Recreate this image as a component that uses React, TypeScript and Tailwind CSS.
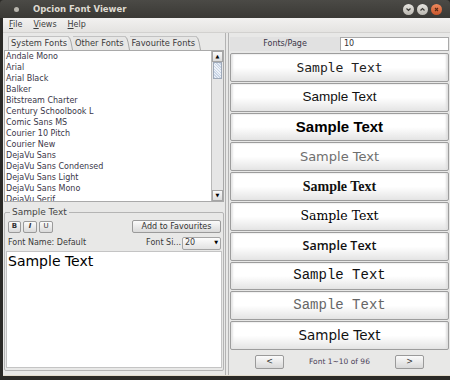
const systemFonts = [
  'Andale Mono',
  'Arial',
  'Arial Black',
  'Balker',
  'Bitstream Charter',
  'Century Schoolbook L',
  'Comic Sans MS',
  'Courier 10 Pitch',
  'Courier New',
  'DejaVu Sans',
  'DejaVu Sans Condensed',
  'DejaVu Sans Light',
  'DejaVu Sans Mono',
  'DejaVu Serif'
];

// one entry per preview button, in the order of the font list
const previews = [
  { id: 1, cls: "font-['DejaVu_Sans_Mono',monospace] text-[13px] text-[#222]" },
  { id: 2, cls: "font-['Liberation_Sans',sans-serif] text-[13.5px] text-[#111]" },
  { id: 3, cls: "font-['Liberation_Sans',sans-serif] text-[15px] font-bold text-black" },
  { id: 4, cls: "font-['DejaVu_Sans',sans-serif] text-[13px] text-[#6f6f6f]" },
  { id: 5, cls: "font-['Liberation_Serif',serif] text-[14px] font-bold text-[#111]" },
  { id: 6, cls: "font-['DejaVu_Serif',serif] text-[12.5px] text-black" },
  { id: 7, cls: "font-['Open_Sans',sans-serif] text-[12.5px] font-semibold text-[#111]" },
  { id: 8, cls: "font-['Liberation_Mono',monospace] text-[14px] text-[#111]" },
  { id: 9, cls: "font-['Liberation_Mono',monospace] text-[14px] text-[#666]" },
  { id: 10, cls: "font-['DejaVu_Sans',sans-serif] text-[13.5px] text-[#111]" }
];

function TitleButton({ kind }: { kind: 'min' | 'max' | 'close' }) {
  const close = kind === 'close';
  return (
    <div
      className={
        'w-[11px] h-[11px] rounded-full flex items-center justify-center ' +
        (close
          ? 'bg-gradient-to-b from-[#f08a5d] to-[#c9562b]'
          : 'bg-gradient-to-b from-[#e8e6e1] to-[#bab7b0]')
      }
    >
      <svg width="7" height="7" viewBox="0 0 7 7">
        {kind === 'min' && <path d="M1.5 2.5 L3.5 4.5 L5.5 2.5" stroke="#3c3b37" strokeWidth="1.2" fill="none" />}
        {kind === 'max' && <path d="M1.5 4.5 L3.5 2.5 L5.5 4.5" stroke="#3c3b37" strokeWidth="1.2" fill="none" />}
        {close && <path d="M2 2 L5 5 M5 2 L2 5" stroke="#5a2a15" strokeWidth="1.1" fill="none" />}
      </svg>
    </div>
  );
}

function Tab({ label, first }: { label: string; first?: boolean }) {
  return (
    <div className="flex items-end h-full">
      <div
        className={
          'h-full flex items-center pl-[2px] pr-[1px] border-t border-[#c2c2c2] ' +
          (first ? 'border-l rounded-tl-[2px] bg-[#eeeeed]' : 'bg-[#e6e6e5]')
        }
      >
        {label}
      </div>
      <svg width="5" height="14" viewBox="0 0 5 14" className="shrink-0">
        <path d="M0 0.5 Q2 1 3 6 L4.5 14" stroke="#a8a8a8" fill="none" />
      </svg>
    </div>
  );
}

export default function App() {
  return (
    <div className="w-[450px] h-[380px] bg-[#2b2a27] flex flex-col font-['DejaVu_Sans',sans-serif] text-[8px] text-[#333] overflow-hidden">
      {/* title bar */}
      <div className="h-[18px] shrink-0 bg-gradient-to-b from-[#4b4a46] to-[#3a3935] rounded-t-[4px] flex items-center pl-[14px] pr-[8px]">
        <div className="w-[5px] h-[5px] rounded-full bg-[#b9b6ae]" />
        <span className="ml-[14px] text-[8.5px] font-bold text-[#dfdbd2]">Opcion Font Viewer</span>
        <div className="ml-auto flex gap-[3px]">
          <TitleButton kind="min" />
          <TitleButton kind="max" />
          <TitleButton kind="close" />
        </div>
      </div>

      {/* window body */}
      <div className="h-[358px] shrink-0 ml-[3px] bg-[#e8e8e7] border-b border-[#e3dccd] flex flex-col">
        {/* menu bar */}
        <div className="h-[15px] shrink-0 bg-gradient-to-b from-[#f2f1f0] to-[#e4e3e1] border-b border-[#d2d1cf] flex items-center gap-[11px] pl-[6px] text-[8px] text-[#3c3c3c]">
          <span><u>F</u>ile</span>
          <span><u>V</u>iews</span>
          <span><u>H</u>elp</span>
        </div>

        <div className="flex-1 flex min-h-0">
          {/* left panel */}
          <div className="w-[223px] shrink-0 flex flex-col border-r border-[#b3b3b3] pl-[1px] pr-[1px]">
            <div className="h-[14px] mt-[3px] shrink-0 flex pl-[4px] text-[8.3px] text-[#3a3a3a]">
              <Tab label="System Fonts" first />
              <Tab label="Other Fonts" />
              <Tab label="Favourite Fonts" />
            </div>

            {/* font list */}
            <div className="h-[152px] shrink-0 flex border border-[#a9a9a9] bg-white">
              <div className="flex-1 overflow-hidden text-[#3a3648]">
                {systemFonts.map((f) => (
                  <div key={f} className="h-[11px] leading-[11px] pl-[1px] whitespace-nowrap">{f}</div>
                ))}
              </div>
              <div className="w-[12px] shrink-0 border-l border-[#b9b9b9] bg-[#e6e6e6] flex flex-col">
                <div className="h-[11px] border border-[#a5a5a5] bg-gradient-to-b from-[#fafafa] to-[#dcdcdc] flex items-center justify-center text-[5px] text-black">▲</div>
                <div className="h-[17px] mx-[1px] border border-[#9fa9b8] bg-[repeating-linear-gradient(45deg,#c9d5e6_0px,#c9d5e6_1px,#eef2f8_1px,#eef2f8_2px)]" />
                <div className="flex-1" />
                <div className="h-[11px] border border-[#a5a5a5] bg-gradient-to-b from-[#fafafa] to-[#dcdcdc] flex items-center justify-center text-[5px] text-black">▼</div>
              </div>
            </div>

            {/* Sample Text group */}
            <div className="relative mt-[10px] h-[159px] shrink-0 border border-[#b4b4b4] rounded-[2px] flex flex-col px-[1px] pb-[2px]">
              <span className="absolute -top-[6px] left-[5px] px-[2px] bg-[#e8e8e7] text-[9px] leading-[11px] text-[#454545]">Sample Text</span>
              <div className="mt-[7px] h-[13px] flex items-center pl-[2px] pr-[1px]">
                <div className="flex gap-[2px]">
                  <div className="w-[13px] h-[12px] border border-[#9a9a9a] rounded-[2px] bg-gradient-to-b from-[#fbfbfb] to-[#dadada] flex items-center justify-center text-[7px] font-bold">B</div>
                  <div className="w-[14px] h-[12px] border border-[#9a9a9a] rounded-[2px] bg-gradient-to-b from-[#fbfbfb] to-[#dadada] flex items-center justify-center text-[7px] font-bold italic">I</div>
                  <div className="w-[14px] h-[12px] border border-[#9a9a9a] rounded-[2px] bg-gradient-to-b from-[#fbfbfb] to-[#dadada] flex items-center justify-center text-[7px]">U</div>
                </div>
                <div className="ml-auto w-[89px] h-[13px] border border-[#9a9a9a] rounded-[2px] bg-gradient-to-b from-[#fbfbfb] to-[#dadada] flex items-center justify-center text-[8px] text-[#333]">Add to Favourites</div>
              </div>
              <div className="h-[14px] mt-[3px] flex items-center pl-[2px] pr-[1px] text-[8px] text-[#3a3a3a]">
                <span>Font Name: Default</span>
                <span className="ml-auto mr-[1px]">Font Si...</span>
                <div className="w-[39px] h-[13px] border border-[#a5a5a5] rounded-[2px] bg-gradient-to-b from-[#fdfdfd] to-[#e2e2e2] flex items-center px-[2px]">
                  <span>20</span>
                  <span className="ml-auto text-[5px] text-black">▼</span>
                </div>
              </div>
              <div className="flex-1 mt-[1px] bg-white border border-[#c4c4c4] px-[1px] pt-[1px]">
                <span className="text-[14px] leading-[16px] text-black">Sample Text</span>
              </div>
            </div>
          </div>

          {/* right panel */}
          <div className="flex-1 flex flex-col border-l border-[#b3b3b3] ml-[2px] pl-[1px] pr-[1px]">
            <div className="h-[14px] mt-[4px] shrink-0 flex">
              <div className="w-[110px] shrink-0 bg-[#e1e1e1] flex items-center justify-center text-[#3b3548]">Fonts/Page</div>
              <div className="flex-1 bg-white border border-[#a9a9a9] flex items-center pl-[3px] text-[#333]">10</div>
            </div>

            <div className="h-[297px] mt-[2px] shrink-0 flex flex-col gap-[1px]">
              {previews.map((p) => (
                <div
                  key={p.id}
                  className="flex-1 border border-[#9d9d9d] rounded-[2px] bg-gradient-to-b from-white via-white to-[#e4e4e4] shadow-[inset_-2px_0_2px_#e0e0e0,inset_2px_0_2px_#e6e6e6] flex items-center justify-center"
                >
                  <span className={p.cls}>Sample Text</span>
                </div>
              ))}
            </div>

            <div className="flex-1 flex items-center pb-[1px]">
              <div className="ml-[25px] w-[29px] h-[14px] border border-[#9a9a9a] rounded-[2px] bg-gradient-to-b from-[#fbfbfb] to-[#d8d8d8] flex items-center justify-center text-[8px]">&lt;</div>
              <span className="flex-1 text-center text-[7.5px] text-[#4a3f58]">Font 1~10 of 96</span>
              <div className="mr-[25px] w-[29px] h-[14px] border border-[#9a9a9a] rounded-[2px] bg-gradient-to-b from-[#fbfbfb] to-[#d8d8d8] flex items-center justify-center text-[8px]">&gt;</div>
            </div>
          </div>
        </div>
      </div>
    </div>
  );
}
